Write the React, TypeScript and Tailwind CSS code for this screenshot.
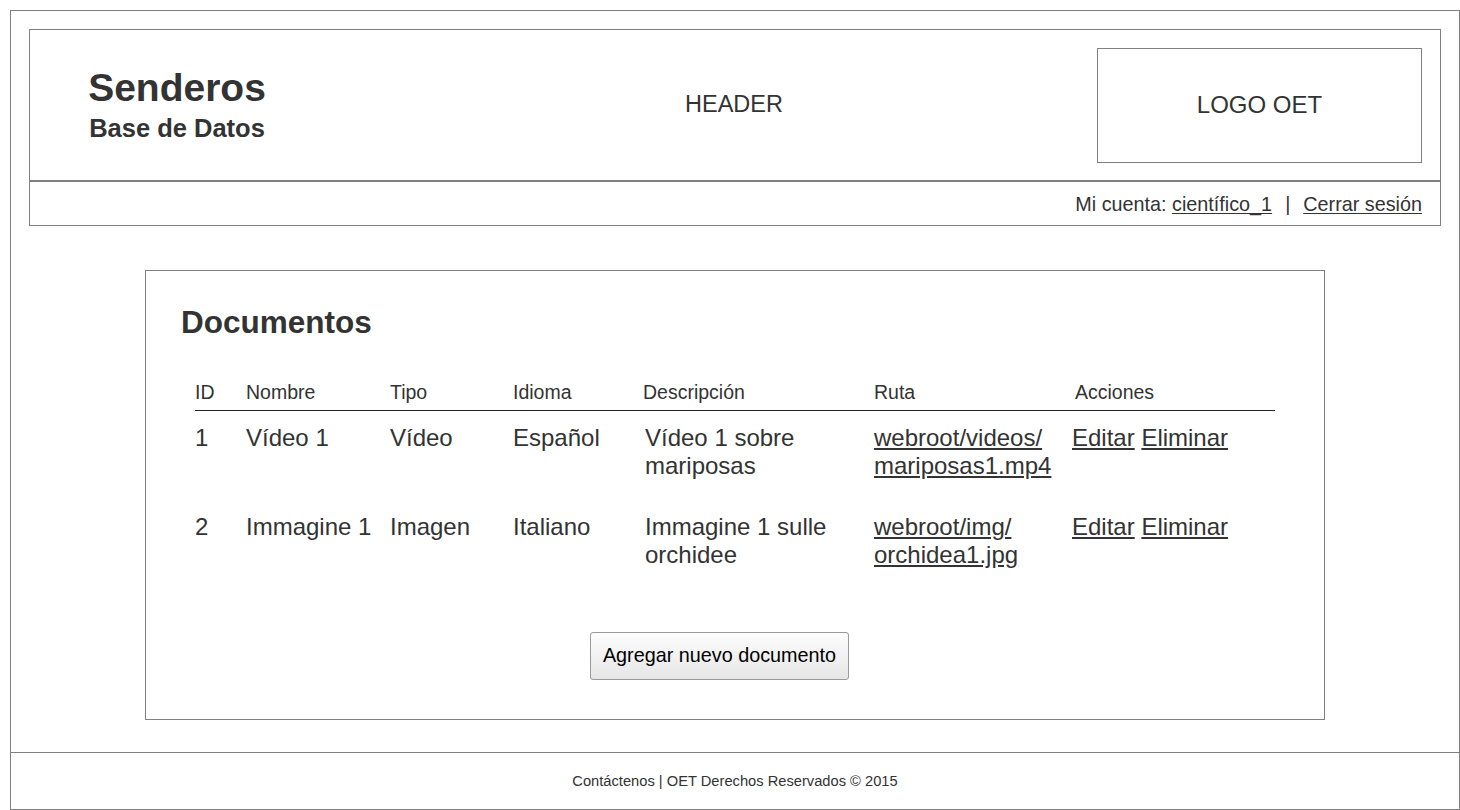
import React from "react";

const cols = "grid grid-cols-[51px_144px_123px_130px_231px_201px_200px]";

const docs = [
  {
    id: "1",
    nombre: "Vídeo 1",
    tipo: "Vídeo",
    idioma: "Español",
    desc: ["Vídeo 1 sobre", "mariposas"],
    ruta: ["webroot/videos/", "mariposas1.mp4"],
  },
  {
    id: "2",
    nombre: "Immagine 1",
    tipo: "Imagen",
    idioma: "Italiano",
    desc: ["Immagine 1 sulle", "orchidee"],
    ruta: ["webroot/img/", "orchidea1.jpg"],
  },
];

const heads = ["ID", "Nombre", "Tipo", "Idioma", "Descripción", "Ruta", "Acciones"];

const App = () => {
  return (
    <div
      className="w-[1460px] h-[810px] bg-white text-[#333] overflow-hidden"
      style={{ fontFamily: "'Liberation Sans', Arial, sans-serif" }}
    >
      <div className="ml-[10px] mt-[10px] w-[1450px] h-[800px] border border-[#808080] flex flex-col">
        {/* header */}
        <header className="mx-[18px] mt-[18px] border border-[#808080]">
          <div className="h-[152px] flex items-center border-b-2 border-[#808080]">
            <div className="w-[341px] pl-[58px] pb-[2px] shrink-0">
              <div className="w-[178px] text-center font-bold">
                <div className="text-[39px] leading-[40px]">Senderos</div>
                <div className="text-[25.5px] leading-[24px] mt-[8px]">Base de Datos</div>
              </div>
            </div>
            <div className="flex-1 text-center text-[23.5px]">HEADER</div>
            <div className="w-[325px] h-[115px] mr-[18px] border border-[#808080] flex items-center justify-center text-[24px]">
              LOGO OET
            </div>
          </div>
          <div className="h-[43px] flex items-center justify-end pr-[18px] pt-[3px] text-[19.8px]">
            <span>Mi cuenta:&nbsp;</span>
            <a className="underline underline-offset-2">científico_1</a>
            <span className="px-[13px]">|</span>
            <a className="underline underline-offset-2">Cerrar sesión</a>
          </div>
        </header>

        {/* documentos */}
        <main className="mt-[44px] mx-auto w-[1180px] h-[450px] border border-[#808080]">
          <h1 className="pl-[35px] pt-[33px] text-[31.5px] leading-[36px] font-bold">Documentos</h1>
          <div className="ml-[49px] w-[1080px] mt-[41px]">
            <div className={`${cols} text-[19.5px] leading-[22px] pb-[7px] border-b border-[#222]`}>
              {heads.map((h) => (
                <div key={h}>{h}</div>
              ))}
            </div>
            {docs.map((d) => (
              <div key={d.id} className={`${cols} text-[24px] leading-[28px] pt-[13px] pb-[20px]`}>
                <div>{d.id}</div>
                <div>{d.nombre}</div>
                <div>{d.tipo}</div>
                <div>{d.idioma}</div>
                <div className="pl-[2px]">
                  {d.desc[0]}
                  <br />
                  {d.desc[1]}
                </div>
                <div>
                  <a className="underline underline-offset-2">
                    {d.ruta[0]}
                    <br />
                    {d.ruta[1]}
                  </a>
                </div>
                <div className="-ml-[3px]">
                  <a className="underline underline-offset-2">Editar</a>{" "}
                  <a className="underline underline-offset-2">Eliminar</a>
                </div>
              </div>
            ))}
          </div>
          <button className="ml-[444px] mt-[43px] w-[259px] h-[48px] rounded-[3px] border border-[#9a9a9a] bg-gradient-to-b from-[#fdfdfd] to-[#e6e6e6] text-[19.8px] text-black">
            Agregar nuevo documento
          </button>
        </main>

        {/* footer */}
        <footer className="mt-auto h-[57px] border-t border-[#808080] flex items-center justify-center text-[14.7px]">
          Contáctenos | OET Derechos Reservados © 2015
        </footer>
      </div>
    </div>
  );
};

export default App;
